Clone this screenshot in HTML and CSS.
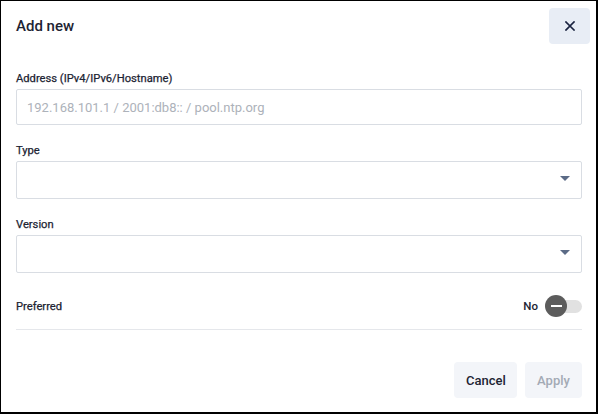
FILE: index.html
```html
<!DOCTYPE html>
<html lang="en">
<head>
<meta charset="utf-8">
<title>Add new</title>
<link rel="stylesheet" href="styles.css">
</head>
<body>
<div class="dialog">
  <div class="header">
    <h1 class="title">Add new</h1>
    <button class="close" aria-label="Close">
      <svg width="10" height="10" viewBox="0 0 10 10"><path d="M1 1 L9 9 M9 1 L1 9" stroke="#1a2340" stroke-width="1.7" stroke-linecap="square"/></svg>
    </button>
  </div>
  <div class="field first">
    <label class="label">Address (IPv4/IPv6/Hostname)</label>
    <div class="input"><span class="placeholder">192.168.101.1 / 2001:db8:: / pool.ntp.org</span></div>
  </div>
  <div class="field">
    <label class="label">Type</label>
    <div class="select"><span class="caret"></span></div>
  </div>
  <div class="field">
    <label class="label">Version</label>
    <div class="select"><span class="caret"></span></div>
  </div>
  <div class="pref-row">
    <span class="pref-label">Preferred</span>
    <div class="toggle-wrap">
      <span class="toggle-text">No</span>
      <span class="toggle"><span class="knob"><span class="dash"></span></span></span>
    </div>
  </div>
  <div class="footer">
    <button class="btn cancel">Cancel</button>
    <button class="btn apply">Apply</button>
  </div>
</div>
</body>
</html>
```
FILE: styles.css
```css
* { box-sizing: border-box; }
html, body { margin: 0; padding: 0; background: #fff; }
body { font-family: Roboto, "Liberation Sans", Arial, sans-serif; color: #1d2433; }
.dialog {
  width: 598px;
  height: 414px;
  border-style: solid;
  border-color: #000;
  border-width: 1px 2px 2px 1px;
  padding: 7px 14px 14px 15px;
  display: flex;
  flex-direction: column;
}
.header {
  display: flex;
  align-items: center;
  justify-content: space-between;
  height: 36px;
  margin-right: -8px;
}
.title {
  margin: 0;
  font-size: 15px;
  font-weight: 500;
  color: #1d2433;
}
.close {
  width: 41px;
  height: 36px;
  border: none;
  border-radius: 4px;
  background: #e8edf5;
  display: flex;
  align-items: center;
  justify-content: center;
  padding: 0;
}
.field { display: flex; flex-direction: column; margin-top: 18px; }
.field.first { margin-top: 27px; }
.label {
  font-size: 11.2px;
  line-height: 16px;
  font-weight: 400;
  color: #1d2433;
  margin-bottom: 2px;
  -webkit-text-stroke: 0.25px #1d2433;
}
.input {
  height: 36px;
  border: 1px solid #d9dde3;
  border-radius: 2px;
  display: flex;
  align-items: center;
  padding-left: 10px;
}
.placeholder { font-size: 13px; color: #adb2ba; }
.select {
  height: 38px;
  border: 1px solid #d9dde3;
  border-radius: 2px;
  display: flex;
  align-items: center;
  justify-content: flex-end;
  padding-right: 11px;
}
.caret {
  width: 0; height: 0;
  border-left: 5px solid transparent;
  border-right: 5px solid transparent;
  border-top: 5px solid #5b6b86;
  margin-top: -3px;
}
.pref-row {
  display: flex;
  align-items: center;
  justify-content: space-between;
  margin-top: 16px;
  height: 41px;
  padding-bottom: 6px;
  border-bottom: 1px solid #e5e7eb;
}
.pref-label { font-size: 11.2px; font-weight: 400; color: #1d2433; -webkit-text-stroke: 0.25px #1d2433; }
.toggle-wrap { display: flex; align-items: center; gap: 8px; }
.toggle-text { font-size: 11.5px; font-weight: 500; color: #1d2433; }
.toggle {
  width: 36px;
  height: 13px;
  border-radius: 7px;
  background: #e1e1e1;
  display: flex;
  align-items: center;
}
.knob {
  width: 22px;
  height: 22px;
  border-radius: 50%;
  background: #5c5c5c;
  display: flex;
  align-items: center;
  justify-content: center;
  margin-left: -1px;
}
.dash { width: 11px; height: 2px; background: #fff; }
.footer {
  margin-top: auto;
  display: flex;
  justify-content: flex-end;
  gap: 8px;
}
.btn {
  height: 36px;
  border: none;
  border-radius: 4px;
  background: #f3f5f9;
  font-family: Roboto, "Liberation Sans", Arial, sans-serif;
  font-size: 13px;
  font-weight: 500;
  padding: 0 12px;
}
.cancel { color: #1d2433; width: 63px; }
.apply { color: #a3aab5; width: 57px; }
```
